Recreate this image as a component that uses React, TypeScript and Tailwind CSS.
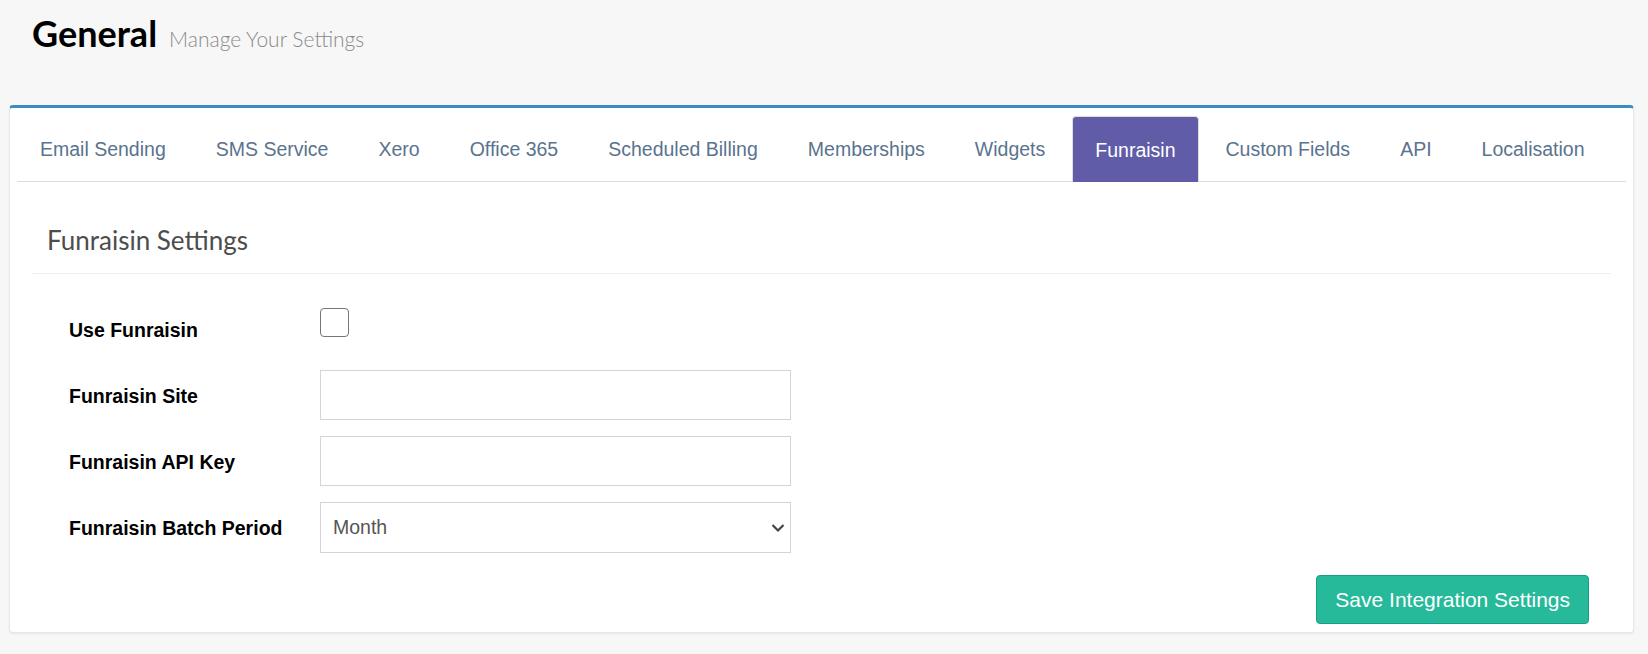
import { useState } from "react";

const tabs = [
  "Email Sending",
  "SMS Service",
  "Xero",
  "Office 365",
  "Scheduled Billing",
  "Memberships",
  "Widgets",
  "Funraisin",
  "Custom Fields",
  "API",
  "Localisation",
];

const Label = ({ children }: { children: React.ReactNode }) => (
  <label className="w-[251px] shrink-0 pt-[4px] text-[19.5px] font-bold text-black">{children}</label>
);

export default function App() {
  const [active, setActive] = useState("Funraisin");
  const [useFunraisin, setUseFunraisin] = useState(false);

  return (
    <div className="min-h-screen bg-[#f7f7f7] font-['Liberation_Sans',Arial,sans-serif]">
      <div className="h-[105px] pl-[32px] pt-[13px]">
        <h3 className="flex items-baseline gap-[12px] font-['Lato',sans-serif]">
          <span className="text-[36px] font-bold leading-[40px] text-black">General</span>
          <small className="text-[21px] font-light text-[#8a8a8a]">Manage Your Settings</small>
        </h3>
      </div>

      <div className="ml-[9px] mr-[14px] rounded-[4px] border border-t-[3px] border-[#e6e9ed] border-t-[#3b8dc0] bg-white px-[7px] pb-[8px] pt-[8px] shadow-[0_1px_2px_rgba(0,0,0,0.08)]">
        <ul className="flex border-b border-[#dddddd]">
          {tabs.map((t) => (
            <li key={t} className="-mb-px mr-[4px]">
              <button
                onClick={() => setActive(t)}
                className={
                  t === active
                    ? "flex h-[66px] items-center rounded-t-[4px] border border-b-0 border-[#dddddd] bg-[#605ca8] px-[22px] pt-[2px] text-[19.5px] text-white"
                    : "flex h-[66px] items-center border border-transparent px-[22px] pt-[2px] text-[19.5px] text-[#5a738e]"
                }
              >
                {t}
              </button>
            </li>
          ))}
        </ul>

        <div className="px-[15px]">
          <h2 className="mt-[43px] border-b border-[#efefef] pb-[17px] pl-[15px] font-['Lato',sans-serif] text-[26px] leading-[31px] text-[#4d4d4d]">
            Funraisin Settings
          </h2>

          <form className="mt-[30px] flex flex-col gap-[16px] pl-[37px]">
            <div className="flex h-[50px] items-center">
              <Label>Use Funraisin</Label>
              <input
                type="checkbox"
                checked={useFunraisin}
                onChange={(e) => setUseFunraisin(e.target.checked)}
                className="-mt-[13px] h-[29px] w-[29px] appearance-none rounded-[4px] border-[1.5px] border-[#767676] bg-white checked:bg-[#26b99a]"
              />
            </div>
            <div className="flex h-[50px] items-center">
              <Label>Funraisin Site</Label>
              <input
                type="text"
                className="h-[50px] w-[471px] border border-[#d2d4dc] px-[12px] text-[19.5px] outline-none"
              />
            </div>
            <div className="flex h-[50px] items-center">
              <Label>Funraisin API Key</Label>
              <input
                type="text"
                className="h-[50px] w-[471px] border border-[#d2d4dc] px-[12px] text-[19.5px] outline-none"
              />
            </div>
            <div className="flex h-[50px] items-center">
              <Label>Funraisin Batch Period</Label>
              <div className="relative">
                <select
                  defaultValue="Month"
                  className="h-[51px] w-[471px] appearance-none border border-[#d2d4dc] bg-white px-[12px] pt-[2px] text-[19.5px] text-[#555555] outline-none"
                >
                  <option>Day</option>
                  <option>Week</option>
                  <option>Month</option>
                </select>
                <svg
                  className="pointer-events-none absolute right-[6px] top-[21px]"
                  width="14"
                  height="10"
                  viewBox="0 0 14 10"
                >
                  <polyline points="1.5,2 7,7.5 12.5,2" fill="none" stroke="#444" strokeWidth="2.2" />
                </svg>
              </div>
            </div>
          </form>

          <div className="mt-[23px] flex justify-end pr-[22px]">
            <button className="h-[49px] rounded-[4px] border border-[#169f85] bg-[#26b99a] px-[18px] text-[21px] text-white">
              Save Integration Settings
            </button>
          </div>
        </div>
      </div>
    </div>
  );
}
